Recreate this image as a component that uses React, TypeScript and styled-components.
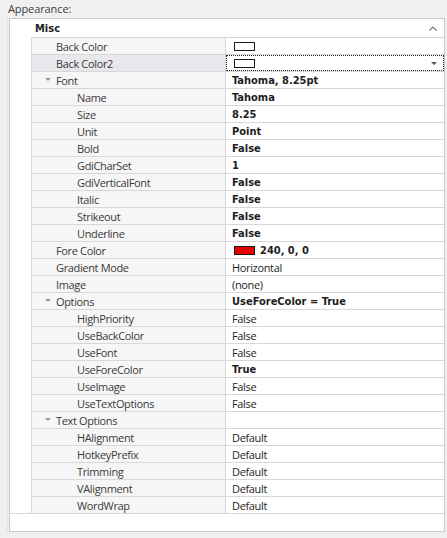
import React from "react";
import styled, { createGlobalStyle, css } from "styled-components";

const GlobalStyle = createGlobalStyle`
  html, body { margin: 0; padding: 0; background: #f0f0f0; }
  body { font-family: "Open Sans", "Segoe UI", sans-serif; font-size: 11px; color: #333; }
`;

const Page = styled.div`
  width: 447px;
  height: 538px;
  background: #f0f0f0;
  overflow: hidden;
`;

const Caption = styled.div`
  height: 18px;
  padding-left: 8px;
  line-height: 17px;
  font-size: 11px;
  color: #3c3c3c;
  letter-spacing: -0.1px;
`;

const Frame = styled.div`
  margin-left: 7px;
  border-left: 1px solid #e2e2e2;
  padding-left: 1px;
`;

const Panel = styled.div`
  width: 434px;
  height: 512px;
  border: 1px solid #c9c9c9;
  background: #fff;
  display: flex;
  flex-direction: column;
`;

const Category = styled.div`
  height: 18px;
  display: flex;
  align-items: center;
  justify-content: space-between;
  padding-left: 25px;
  padding-right: 7px;
  font-family: "DejaVu Sans Condensed", "DejaVu Sans", sans-serif;
  font-weight: bold;
  font-size: 11px;
  color: #1e1e1e;
`;

const Body = styled.div`
  display: flex;
  border-bottom: 1px solid #d7d7dc;
`;

const Indent = styled.div`
  width: 21px;
  background: #fff;
`;

const Grid = styled.div`
  flex: 1;
  border-left: 1px solid #d7d7dc;
  border-top: 1px solid #d7d7dc;
`;

const Row = styled.div`
  display: grid;
  grid-template-columns: 194px 1fr;
  height: 16px;
  border-bottom: 1px solid #d7d7dc;
  &:last-child { border-bottom: none; }
`;

const LabelCell = styled.div<{ $level: number; $focused?: boolean }>`
  display: flex;
  align-items: center;
  border-right: 1px solid #d7d7dc;
  background: ${(p) => (p.$focused ? "#e8e8ec" : "#f6f6f6")};
  padding-left: ${(p) => (p.$level === 0 ? 24 : 45)}px;
  position: relative;
  color: #3a3a3a;
  white-space: nowrap;
  letter-spacing: -0.35px;
`;

const Expander = styled.span`
  position: absolute;
  left: 13px;
  top: 6px;
  width: 0;
  height: 0;
  border-left: 3px solid transparent;
  border-right: 3px solid transparent;
  border-top: 3px solid #9a9a9a;
`;

const ValueCell = styled.div<{ $bold?: boolean; $focused?: boolean }>`
  display: flex;
  align-items: center;
  gap: 5px;
  padding-left: 6px;
  position: relative;
  white-space: nowrap;
  color: #1e1e1e;
  ${(p) =>
    p.$bold
      ? css`
          font-family: "DejaVu Sans Condensed", "DejaVu Sans", sans-serif;
          font-weight: bold;
        `
      : css`
          font-family: "Open Sans", sans-serif;
          letter-spacing: -0.35px;
        `}
  ${(p) =>
    p.$focused &&
    css`
      outline: 1px dotted #222;
      outline-offset: -1px;
    `}
`;

const Swatch = styled.span<{ $color: string }>`
  display: inline-block;
  width: 19px;
  height: 7px;
  margin-left: 2px;
  border: 1px solid #1a1a1a;
  background: ${(p) => p.$color};
`;

const DropArrow = styled.span`
  position: absolute;
  right: 7px;
  top: 7px;
  width: 0;
  height: 0;
  border-left: 3px solid transparent;
  border-right: 3px solid transparent;
  border-top: 3px solid #555;
`;

const Footer = styled.div`
  flex: 1;
`;

type RowData = {
  label: string;
  level: number;
  value?: string;
  bold?: boolean;
  expander?: boolean;
  swatch?: string;
  focused?: boolean;
};

const rows: RowData[] = [
  { label: "Back Color", level: 0, swatch: "#fff" },
  { label: "Back Color2", level: 0, swatch: "#fff", focused: true },
  { label: "Font", level: 0, expander: true, value: "Tahoma, 8.25pt", bold: true },
  { label: "Name", level: 1, value: "Tahoma", bold: true },
  { label: "Size", level: 1, value: "8.25", bold: true },
  { label: "Unit", level: 1, value: "Point", bold: true },
  { label: "Bold", level: 1, value: "False", bold: true },
  { label: "GdiCharSet", level: 1, value: "1", bold: true },
  { label: "GdiVerticalFont", level: 1, value: "False", bold: true },
  { label: "Italic", level: 1, value: "False", bold: true },
  { label: "Strikeout", level: 1, value: "False", bold: true },
  { label: "Underline", level: 1, value: "False", bold: true },
  { label: "Fore Color", level: 0, swatch: "#e80000", value: "240, 0, 0", bold: true },
  { label: "Gradient Mode", level: 0, value: "Horizontal" },
  { label: "Image", level: 0, value: "(none)" },
  { label: "Options", level: 0, expander: true, value: "UseForeColor = True", bold: true },
  { label: "HighPriority", level: 1, value: "False" },
  { label: "UseBackColor", level: 1, value: "False" },
  { label: "UseFont", level: 1, value: "False" },
  { label: "UseForeColor", level: 1, value: "True", bold: true },
  { label: "UseImage", level: 1, value: "False" },
  { label: "UseTextOptions", level: 1, value: "False" },
  { label: "Text Options", level: 0, expander: true },
  { label: "HAlignment", level: 1, value: "Default" },
  { label: "HotkeyPrefix", level: 1, value: "Default" },
  { label: "Trimming", level: 1, value: "Default" },
  { label: "VAlignment", level: 1, value: "Default" },
  { label: "WordWrap", level: 1, value: "Default" },
];

const Chevron = () => (
  <svg width="8" height="5" viewBox="0 0 8 5">
    <path d="M0.5 4.5 L4 1 L7.5 4.5" fill="none" stroke="#777" strokeWidth="1.2" />
  </svg>
);

export default function App() {
  return (
    <Page>
      <GlobalStyle />
      <Caption>Appearance:</Caption>
      <Frame>
        <Panel>
          <Category>
            <span>Misc</span>
            <Chevron />
          </Category>
          <Body>
            <Indent />
            <Grid>
              {rows.map((r) => (
                <Row key={r.label}>
                  <LabelCell $level={r.level} $focused={r.focused}>
                    {r.expander && <Expander />}
                    {r.label}
                  </LabelCell>
                  <ValueCell $bold={r.bold} $focused={r.focused}>
                    {r.swatch && <Swatch $color={r.swatch} />}
                    {r.value && <span>{r.value}</span>}
                    {r.focused && <DropArrow />}
                  </ValueCell>
                </Row>
              ))}
            </Grid>
          </Body>
          <Footer />
        </Panel>
      </Frame>
    </Page>
  );
}
